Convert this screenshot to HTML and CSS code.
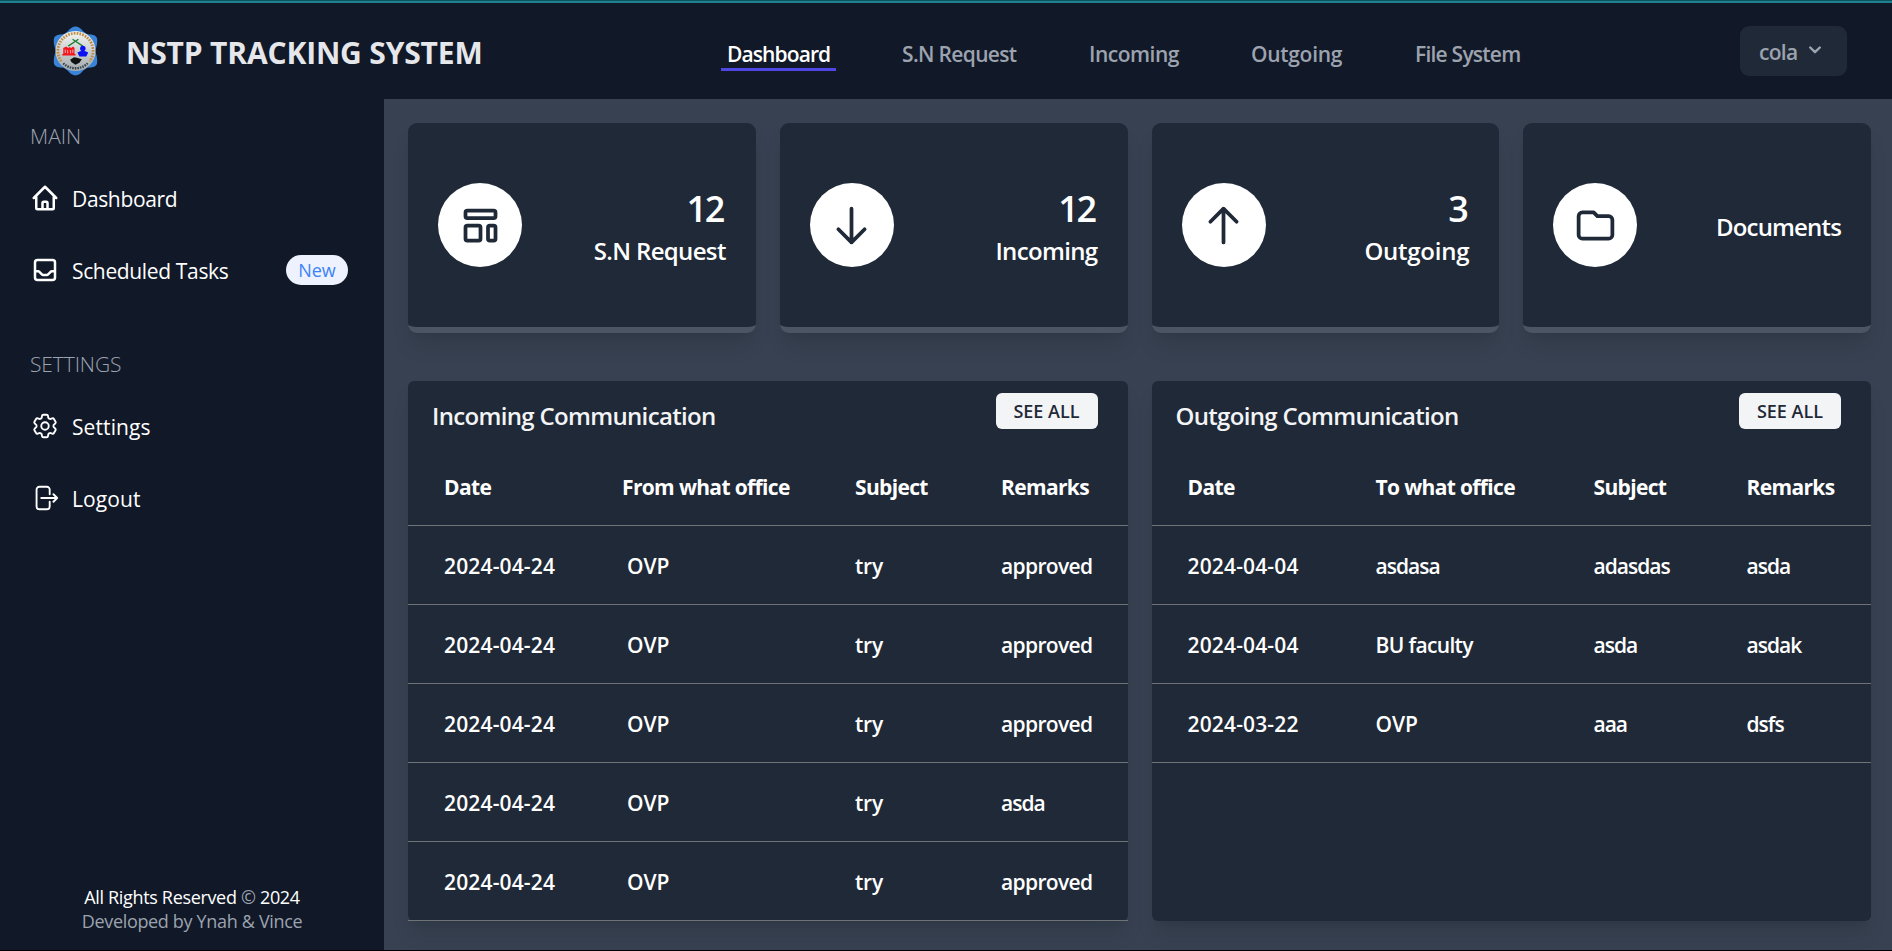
FILE: index.html
```html
<!DOCTYPE html>
<html lang="en">
<head>
<meta charset="utf-8">
<title>NSTP Tracking System</title>
<link rel="stylesheet" href="styles.css">
</head>
<body>
<div class="app">
  <header class="topbar">
    <div class="brand">
      <svg class="brand-logo" viewBox="0 0 46 50">
        <path d="M23 0Q27 0 31 5L35 8Q44 8 45 12Q46 17 43 25Q46 33 45 38Q44 42 35 42L31 45Q27 50 23 50Q19 50 15 45L11 42Q2 42 1 38Q0 33 3 25Q0 17 1 12Q2 8 11 8L15 5Q19 0 23 0Z" fill="#3984d8"/>
        <circle cx="23" cy="25" r="20.5" fill="url(#seal)"/>
        <path d="M8.500 35.500A18 18 0 1 1 37.500 35.500" fill="none" stroke="#c08a40" stroke-width="2.800" stroke-dasharray="1.700 1.200"/>
        <path d="M10.500 37.500A17.800 17.800 0 0 0 35.500 37.500" fill="none" stroke="#39424c" stroke-width="2.400" stroke-dasharray="1.600 1"/>
        <path d="M15.500 20L26 13M30.500 20L20 13" stroke="#1e8030" stroke-width="1.300"/>
        <path d="M9.500 29.500h13.500v-1.500h-1V22l-1.500-1.500-2 1.500-1.500-1-1.500 1-2-1.500L10.500 22v6h-1z" fill="#f5131c"/>
        <path d="M12.500 23.500v3.500M15 24v3.500M18 24v3.500M20.300 23.500v3.500" stroke="#f2d9da" stroke-width=".8"/>
        <circle cx="30.500" cy="22.500" r="2.800" fill="#0a12f4"/>
        <path d="M25 26.500Q30.500 23 36 26.500L34 30.500H27Z" fill="#0a12f4"/>
        <path d="M17.500 34l4-2.500 3 .5 5 1.500-2.500 3.500-4 2-4-2.500z" fill="#101214"/>
        <defs><linearGradient id="seal" x1="0" y1="0" x2="0" y2="1"><stop offset="0" stop-color="#f3f5f4"/><stop offset="1" stop-color="#a3aaac"/></linearGradient></defs>
      </svg>
      <h1 class="brand-name">NSTP TRACKING SYSTEM</h1>
    </div>
    <nav class="nav">
      <a class="nav-link nav-link-active">Dashboard</a>
      <a class="nav-link nav-sn">S.N Request</a>
      <a class="nav-link nav-in">Incoming</a>
      <a class="nav-link nav-out">Outgoing</a>
      <a class="nav-link nav-file">File System</a>
    </nav>
    <button class="user-menu"><span>cola</span>
      <svg class="chevron" viewBox="0 0 12 8"><path d="M1.200 1.500L6 6.200L10.800 1.500"/></svg>
    </button>
  </header>
  <div class="body">
    <aside class="sidebar">
      <div class="menu">
        <h2 class="menu-title">MAIN</h2>
        <a class="menu-item"><svg class="icon" viewBox="0 0 24 24"><path d="M3 12l2-2m0 0l7-7 7 7M5 10v10a1 1 0 001 1h3m10-11l2 2m-2-2v10a1 1 0 01-1 1h-3m-6 0a1 1 0 001-1v-4a1 1 0 011-1h2a1 1 0 011 1v4a1 1 0 001 1m-6 0h6"/></svg><span>Dashboard</span></a>
        <a class="menu-item"><svg class="icon" viewBox="0 0 24 24"><path d="M20 13V6a2 2 0 00-2-2H6a2 2 0 00-2 2v7m16 0v5a2 2 0 01-2 2H6a2 2 0 01-2-2v-5m16 0h-2.586a1 1 0 00-.707.293l-2.414 2.414a1 1 0 01-.707.293h-3.172a1 1 0 01-.707-.293l-2.414-2.414A1 1 0 006.586 13H4"/></svg><span>Scheduled Tasks</span><b class="badge">New</b></a>
        <h2 class="menu-title menu-title-next">SETTINGS</h2>
        <a class="menu-item menu-item-wide"><svg class="icon icon-thin" viewBox="0 0 24 24"><path d="M9.594 3.940c.09-.542.56-.94 1.110-.94h2.593c.55 0 1.020.398 1.110.94l.213 1.281c.063.374.313.686.645.87.074.04.147.083.22.127.325.196.72.257 1.075.124l1.217-.456a1.125 1.125 0 0 1 1.370.49l1.296 2.247a1.125 1.125 0 0 1-.26 1.431l-1.003.827c-.293.241-.438.613-.43.992a7.723 7.723 0 0 1 0 .255c-.008.378.137.75.43.991l1.004.827c.424.35.534.955.26 1.430l-1.298 2.247a1.125 1.125 0 0 1-1.369.491l-1.217-.456c-.355-.133-.75-.072-1.076.124a6.470 6.470 0 0 1-.22.128c-.331.183-.581.495-.644.869l-.213 1.281c-.09.543-.56.94-1.110.94h-2.594c-.55 0-1.019-.398-1.110-.94l-.213-1.281c-.062-.374-.312-.686-.644-.87a6.520 6.520 0 0 1-.22-.127c-.325-.196-.72-.257-1.076-.124l-1.217.456a1.125 1.125 0 0 1-1.369-.49l-1.297-2.247a1.125 1.125 0 0 1 .26-1.431l1.004-.827c.292-.24.437-.613.43-.991a6.932 6.932 0 0 1 0-.255c.007-.38-.138-.751-.43-.992l-1.004-.827a1.125 1.125 0 0 1-.26-1.430l1.297-2.247a1.125 1.125 0 0 1 1.370-.491l1.216.456c.356.133.751.072 1.076-.124.072-.044.146-.086.22-.128.332-.183.582-.495.644-.869l.214-1.280Z"/><path d="M15 12a3 3 0 1 1-6 0 3 3 0 0 1 6 0Z"/></svg><span>Settings</span></a>
        <a class="menu-item menu-item-wide"><svg class="icon icon-thin" viewBox="0 0 24 24"><path d="M15.750 9V5.250A2.250 2.250 0 0013.500 3h-6a2.250 2.250 0 00-2.250 2.250v13.500A2.250 2.250 0 007.500 21h6a2.250 2.250 0 002.250-2.250V15m3 0l3-3m0 0l-3-3m3 3H9"/></svg><span>Logout</span></a>
      </div>
      <footer class="credits">
        <p class="rights">All Rights Reserved <i>©</i> 2024</p>
        <p>Developed by Ynah &amp; Vince</p>
      </footer>
    </aside>
    <main class="content">
      <section class="stats">
        <article class="stat">
          <div class="stat-icon"><svg viewBox="0 0 24 24"><path d="M4 5a1 1 0 011-1h14a1 1 0 011 1v2a1 1 0 01-1 1H5a1 1 0 01-1-1V5zM4 13a1 1 0 011-1h6a1 1 0 011 1v6a1 1 0 01-1 1H5a1 1 0 01-1-1v-6zM16 13a1 1 0 011-1h2a1 1 0 011 1v6a1 1 0 01-1 1h-2a1 1 0 01-1-1v-6z"/></svg></div>
          <div class="stat-text"><p class="count">12</p><p class="label">S.N Request</p></div>
        </article>
        <article class="stat">
          <div class="stat-icon"><svg viewBox="0 0 24 24"><path d="M19 14l-7 7m0 0l-7-7m7 7V3"/></svg></div>
          <div class="stat-text"><p class="count">12</p><p class="label">Incoming</p></div>
        </article>
        <article class="stat">
          <div class="stat-icon"><svg viewBox="0 0 24 24"><path d="M5 10l7-7m0 0l7 7m-7-7v18"/></svg></div>
          <div class="stat-text"><p class="count">3</p><p class="label label-out">Outgoing</p></div>
        </article>
        <article class="stat">
          <div class="stat-icon"><svg viewBox="0 0 24 24"><path d="M3 7v10a2 2 0 002 2h14a2 2 0 002-2V9a2 2 0 00-2-2h-6l-2-2H5a2 2 0 00-2 2z"/></svg></div>
          <div class="stat-text"><p class="label label-docs">Documents</p></div>
        </article>
      </section>
      <section class="panels">
        <article class="panel">
          <div class="panel-head"><h3>Incoming Communication</h3><button class="see-all">SEE ALL</button></div>
          <div class="row row-in row-head"><span>Date</span><span>From what office</span><span>Subject</span><span>Remarks</span></div>
          <div class="row row-in"><span class="date">2024-04-24</span><span class="office">OVP</span><span class="try">try</span><span>approved</span></div>
          <div class="row row-in"><span class="date">2024-04-24</span><span class="office">OVP</span><span class="try">try</span><span>approved</span></div>
          <div class="row row-in"><span class="date">2024-04-24</span><span class="office">OVP</span><span class="try">try</span><span>approved</span></div>
          <div class="row row-in"><span class="date">2024-04-24</span><span class="office">OVP</span><span class="try">try</span><span class="tight">asda</span></div>
          <div class="row row-in"><span class="date">2024-04-24</span><span class="office">OVP</span><span class="try">try</span><span>approved</span></div>
        </article>
        <article class="panel">
          <div class="panel-head"><h3>Outgoing Communication</h3><button class="see-all">SEE ALL</button></div>
          <div class="row row-out row-head"><span>Date</span><span>To what office</span><span>Subject</span><span>Remarks</span></div>
          <div class="row row-out"><span class="date">2024-04-04</span><span class="tight">asdasa</span><span class="tight">adasdas</span><span class="tight">asda</span></div>
          <div class="row row-out"><span class="date">2024-04-04</span><span>BU faculty</span><span class="tight">asda</span><span class="tight">asdak</span></div>
          <div class="row row-out"><span class="date">2024-03-22</span><span class="ovp">OVP</span><span class="tight">aaa</span><span class="tight">dsfs</span></div>
        </article>
      </section>
    </main>
  </div>
</div>
</body>
</html>
```
FILE: styles.css
```css
* { box-sizing: border-box; margin: 0; padding: 0; }
body { width: 1892px; height: 951px; overflow: hidden; background: #374151; color: #fff; font-family: "Open Sans", "Noto Sans", sans-serif; font-size: 21px; line-height: 30px; }
span, a, p, h1, h2, h3 { white-space: nowrap; }

.app { height: 951px; display: flex; flex-direction: column; border-top: 1px solid #0b5563; border-bottom: 1px solid #000; }

/* Top bar */
.topbar { height: 98px; flex: none; display: flex; align-items: flex-start; background: #111827; border-top: 2px solid #22808c; }
.brand { width: 721px; display: flex; padding: 23px 0 0 53px; }
.brand-logo { width: 45px; height: 50px; margin-right: 28px; }
.brand-name { font-size: 30px; line-height: 53px; font-weight: 700; letter-spacing: -.17px; color: #e5e7eb; }
.nav { width: 1019px; display: flex; padding-top: 37px; }
.nav-link { height: 31px; line-height: 29px; padding: 0 6px; color: #9ca3af; font-weight: 600; }
.nav-link-active { width: 115px; color: #fff; border-bottom: 3px solid #4f46e5; letter-spacing: -.9px; }
.nav-sn { width: 127px; margin-left: 60px; letter-spacing: -.66px; }
.nav-in { width: 102px; margin-left: 60px; letter-spacing: -.5px; }
.nav-out { width: 104px; margin-left: 60px; letter-spacing: -.3px; }
.nav-file { margin-left: 60px; letter-spacing: -.77px; }
.user-menu { width: 107px; height: 50px; margin-top: 23px; padding: 2px 0 0 19px; display: flex; align-items: center; border: 0; border-radius: 9px; background: #1f2937; color: #9ca3af; font: 600 21px/30px "Open Sans", sans-serif; letter-spacing: -.7px; }
.chevron { width: 12px; height: 8px; margin: -4px 0 0 12px; fill: none; stroke: currentColor; stroke-width: 2.400; stroke-linecap: round; stroke-linejoin: round; }

/* Sidebar */
.body { flex: 1; display: flex; min-height: 0; }
.sidebar { width: 384px; flex: none; display: flex; flex-direction: column; justify-content: space-between; background: #111827; padding: 22px 30px 17px; }
.menu-title { height: 30px; font-size: 21px; font-weight: 300; color: #9ca3af; }
.menu-title-next { margin-top: 61px; letter-spacing: -.1px; }
.menu-item { height: 36px; display: flex; align-items: center; font-weight: 400; margin-top: 29px; letter-spacing: -.35px; }
.menu-item-wide { letter-spacing: .1px; }
.menu-item + .menu-item { margin-top: 36px; }
.menu-item span { padding-top: 2px; }
.icon { width: 30px; height: 30px; margin-right: 12px; fill: none; stroke: #fff; stroke-width: 2; stroke-linecap: round; stroke-linejoin: round; }
.icon-thin { stroke-width: 1.500; }
.badge { margin-left: auto; margin-right: 6px; width: 62px; height: 30px; border-radius: 15px; background: #eef2ff; color: #3b82f6; font-size: 18px; line-height: 31px; font-weight: 400; letter-spacing: 0; text-align: center; }
.credits { font-size: 18px; line-height: 24px; letter-spacing: -.33px; color: #9ca3af; text-align: center; }
.rights { color: #fff; }
.rights i { font-style: normal; color: #9ca3af; }

/* Counters */
.content { flex: 1; padding: 24px 21px 0 24px; }
.stats { display: grid; grid-template-columns: repeat(4, 1fr); gap: 24px; }
.stat { height: 210px; display: flex; align-items: center; justify-content: space-between; padding: 0 30px; background: #1f2937; border-bottom: 6px solid #4b5563; border-radius: 9px; box-shadow: 0 15px 22px -4px rgba(0,0,0,.1), 0 6px 9px -6px rgba(0,0,0,.1); }
.stat-icon { width: 84px; height: 84px; display: flex; align-items: center; justify-content: center; border-radius: 50%; background: #fff; }
.stat-icon svg { width: 45px; height: 45px; fill: none; stroke: #1f2937; stroke-width: 2; stroke-linecap: round; stroke-linejoin: round; }
.stat-text { text-align: right; font-weight: 600; padding-top: 3px; }
.count { font-size: 36px; line-height: 48px; letter-spacing: -2.500px; padding-right: 3px; }
.label { font-size: 24px; line-height: 36px; letter-spacing: -.65px; }
.label-out { letter-spacing: -.25px; }
.label-docs { letter-spacing: -.84px; }

/* Communication tables */
.panels { display: grid; grid-template-columns: 1fr 1fr; gap: 24px; margin-top: 48px; }
.panel { height: 540px; background: #1f2937; border-radius: 6px; box-shadow: 0 15px 22px -4px rgba(0,0,0,.1), 0 6px 9px -6px rgba(0,0,0,.1); }
.panel-head { height: 66px; display: flex; justify-content: space-between; padding: 12px 30px 0 24px; }
.panel-head h3 { font-size: 24px; line-height: 45px; font-weight: 600; letter-spacing: -.67px; color: #f3f4f6; }
.see-all { width: 102px; height: 36px; border: 0; border-radius: 6px; background: #f3f4f6; color: #1f2937; font: 600 18px/36px "Open Sans", sans-serif; }
.row { height: 79px; display: grid; align-items: center; padding: 2px 0 0 36px; border-bottom: 1px solid #6f7277; font-weight: 600; letter-spacing: -.65px; }
.row-head { font-weight: 700; }
.row-in { grid-template-columns: 178px 233px 146px 1fr; }
.row-out { grid-template-columns: 188px 218px 153px 1fr; }
.date { letter-spacing: .15px; }
.office { padding-left: 5px; letter-spacing: 0; }
.ovp { letter-spacing: 0; }
.try { letter-spacing: -.2px; }
.tight { letter-spacing: -1px; }
```
